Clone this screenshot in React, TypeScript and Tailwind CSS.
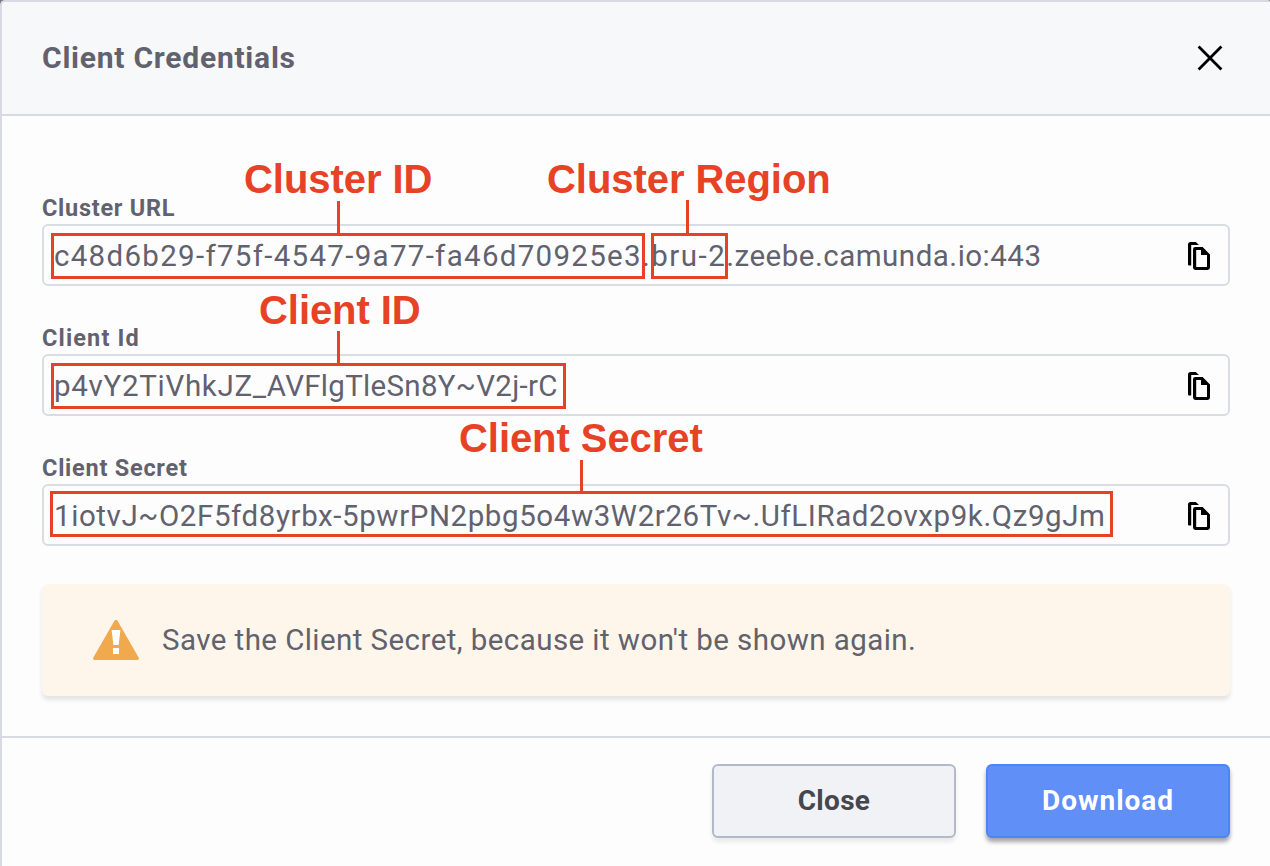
import type { ReactNode } from "react";

function CopyIcon() {
  return (
    <svg className="mt-[2px] block h-[28px] w-[22px] shrink-0" viewBox="0 0 22 28" fill="none">
      <path d="M0 22.6V2.6A2.6 2.6 0 0 1 2.6 0H7.8L11 3.1H3.2V23.6H1A1 1 0 0 1 0 22.6Z" fill="#000" />
      <path fillRule="evenodd" d="M7.4 5H14.6L22 12.4V25.6A2.4 2.4 0 0 1 19.6 28H7.4A2.4 2.4 0 0 1 5 25.6V7.4A2.4 2.4 0 0 1 7.4 5ZM8.2 8V25H19V13H13V8Z" fill="#000" />
    </svg>
  );
}

function Field({ label, labelClass, children, notes }: { label: string; labelClass: string; children: ReactNode; notes: ReactNode }) {
  return (
    <div className="relative">
      <div className={`h-[32px] whitespace-nowrap text-[23.5px] leading-[32px] font-bold ${labelClass}`}>{label}</div>
      <div className="flex h-[62px] items-center justify-between rounded-md border-2 border-[#d8dce3] pr-[18px] pl-[10px]">
        <div className="flex pt-[2px] text-[29.5px] leading-[40px] whitespace-pre">{children}</div>
        <CopyIcon />
      </div>
      {notes}
    </div>
  );
}

const red = "absolute whitespace-nowrap text-[40px] leading-[46px] font-bold tracking-[-0.06px] text-[#e84226] font-['Liberation_Sans',sans-serif]";
const box = "absolute border-[3px] border-[#e84226]";
const line = "absolute w-[3px] bg-[#e84226]";

export default function App() {
  return (
    <div className="h-[866px] w-[1270px] overflow-hidden bg-[#777] font-[Roboto,sans-serif] text-[#62626e]">
      <div className="flex h-full flex-col overflow-hidden rounded-tl-[5px] rounded-tr-[2px] border-t-2 border-l-2 border-[#d8dae3] bg-[#fdfdfe]">
        <header className="flex h-[114px] shrink-0 items-center justify-between border-b-2 border-[#d8dae3] bg-[#f7f8fa] pr-[47px] pl-[40px]">
          <h1 className="text-[30px] leading-[40px] font-bold tracking-[0.76px]">Client Credentials</h1>
          <svg className="h-[26px] w-[26px]" viewBox="0 0 26 26" stroke="#000" strokeWidth="2.8">
            <path d="M1.6 1.6l22.8 22.8M24.4 1.6L1.6 24.4" />
          </svg>
        </header>
        <main className="flex h-[620px] shrink-0 flex-col gap-[36px] pt-[76px] pr-[40px] pl-[40px]">
          <Field
            label="Cluster URL"
            labelClass="tracking-[0.72px]"
            notes={
              <>
                <span className={`${red} top-[-36px] left-[202px]`}>Cluster ID</span>
                <i className={`${line} top-[9px] left-[295px] h-[34px]`} />
                <i className={`${box} top-[41px] left-[9px] h-[46px] w-[594px]`} />
                <span className={`${red} top-[-36px] left-[505px]`}>Cluster Region</span>
                <i className={`${line} top-[8px] left-[644px] h-[35px]`} />
                <i className={`${box} top-[41px] left-[609px] h-[46px] w-[77px]`} />
              </>
            }
          >
            <span className="tracking-[1.3px]">c48d6b29-f75f-4547-9a77-fa46d70925e3</span>
            <span className="tracking-[1.5px]">.bru-2</span>
            <span className="tracking-[0.5px]">.zeebe.camunda.io:443</span>
          </Field>
          <Field
            label="Client Id"
            labelClass="tracking-[1.15px]"
            notes={
              <>
                <span className={`${red} top-[-35px] left-[217px]`}>Client ID</span>
                <i className={`${line} top-[9px] left-[295px] h-[34px]`} />
                <i className={`${box} top-[41px] left-[9px] h-[46px] w-[515px]`} />
              </>
            }
          >
            <span className="tracking-[0.7px]">p4vY2TiVhkJZ_</span>
            <span className="tracking-[0.3px]">AVFlgTleSn8Y~V2j-rC</span>
          </Field>
          <Field
            label="Client Secret"
            labelClass="tracking-[0.75px]"
            notes={
              <>
                <span className={`${red} top-[-37px] left-[417px]`}>Client Secret</span>
                <i className={`${line} top-[8px] left-[538px] h-[34px]`} />
                <i className={`${box} top-[39px] left-[8px] h-[46px] w-[1063px]`} />
              </>
            }
          >
            <span className="tracking-[0.59px]">1iotvJ~O2F5fd8yrbx-5pwrPN2pbg5o4w3W2r26Tv~.UfLIRad2ovxp9k.Qz9gJm</span>
          </Field>
          <div className="mt-[2px] flex h-[112px] shrink-0 items-center rounded-md bg-[#fef6ea] pl-[51px] shadow-[0_4px_4px_rgba(0,0,0,0.1)]">
            <svg className="h-[40px] w-[46px]" viewBox="0 0 46 40">
              <path d="M21.3.9a2 2 0 0 1 3.4 0l20.9 36.6a1.6 1.6 0 0 1-1.4 2.5H1.8a1.6 1.6 0 0 1-1.4-2.5Z" fill="#f0a94d" />
              <path d="M18.6 10h8.8l-1.8 15h-5.2ZM20 28h6v6h-6Z" fill="#fff" />
            </svg>
            <p className="ml-[23px] text-[29.5px] leading-[40px] tracking-[0.43px]">Save the Client Secret, because it won't be shown again.</p>
          </div>
        </main>
        <footer className="flex grow items-start justify-end gap-[30px] border-t-2 border-[#d8dae3] pt-[26px] pr-[40px] text-[28px] font-bold">
          <button className="h-[74px] w-[244px] rounded-md border-2 border-[#b0bac9] bg-[#f1f2f5] tracking-[0.3px] text-[#45464e] shadow-[0_4px_4px_rgba(0,0,0,0.08)]">Close</button>
          <button className="h-[74px] w-[244px] rounded-md border-2 border-[#5082fa] bg-[#608ff7] tracking-[0.95px] text-white shadow-[0_4px_4px_rgba(0,0,0,0.35)]">Download</button>
        </footer>
      </div>
    </div>
  );
}
